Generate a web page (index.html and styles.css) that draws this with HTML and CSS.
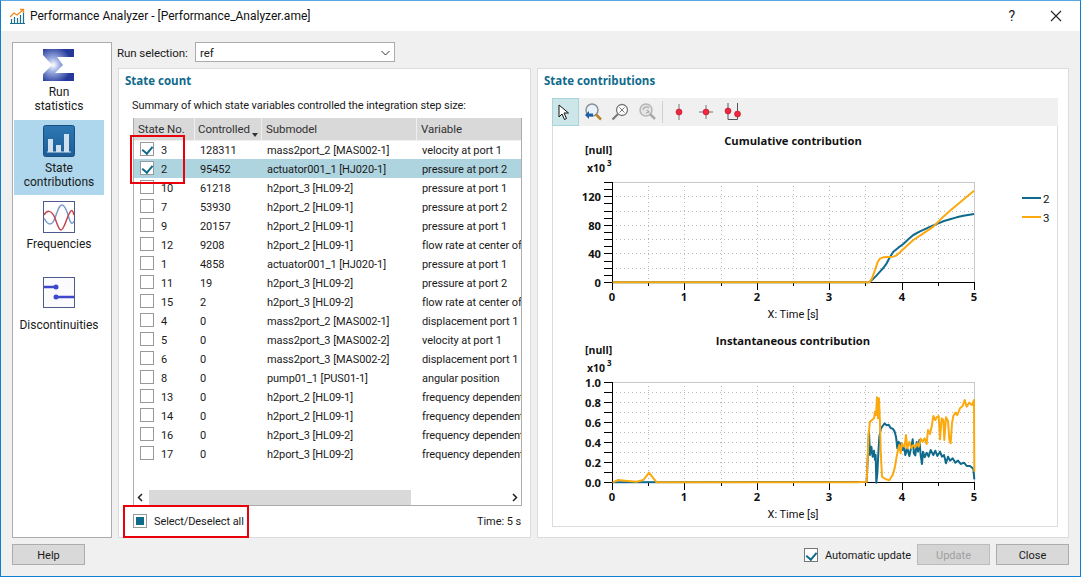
FILE: index.html
```html
<!DOCTYPE html>
<html lang="en">
<head>
<meta charset="utf-8">
<title>Performance Analyzer</title>
<link rel="stylesheet" href="styles.css">
</head>
<body>
<div class="window">
  <header class="titlebar">
    <svg class="app-icon" width="17" height="17" viewBox="0 0 17 17">
      <path d="M1 15.500h15M2.500 15V11M5.500 15V9M8.500 15V10M11.500 15V7M14.500 15V5" fill="none" stroke="#1d6f8f" stroke-width="1.200"/>
      <path d="M1 9l4-4 3 2 6-5M11 1.500h3.500V5" fill="none" stroke="#f08a24" stroke-width="1.300"/>
    </svg>
    <span class="title-text">Performance Analyzer - [Performance_Analyzer.ame]</span>
    <span class="title-help">?</span>
    <svg class="title-close" width="12" height="12" viewBox="0 0 12 12"><path d="M1 1l10 10M11 1L1 11" stroke="#222" stroke-width="1.100" fill="none"/></svg>
  </header>

  <div class="body">
    <div class="workspace">
      <nav class="sidebar">
        <div class="nav-item nav-first">
          <svg width="32" height="33" viewBox="0 0 32 33">
            <defs>
              <radialGradient id="sig" cx="0.33" cy="0.5" r="0.6">
                <stop offset="0" stop-color="#ffffff"/><stop offset="0.35" stop-color="#9fb0e2"/><stop offset="1" stop-color="#24399a"/>
              </radialGradient>
            </defs>
            <path d="M0 0H31V8H14L20 16 12 24H31V32H0V25L9 16 0 6Z" fill="url(#sig)"/>
          </svg>
          <span>Run<br>statistics</span>
        </div>
        <div class="nav-item nav-selected">
          <svg width="33" height="32" viewBox="0 0 33 32">
            <defs><linearGradient id="barbg" x1="0" y1="0" x2="0" y2="1"><stop offset="0" stop-color="#2c78b4"/><stop offset="1" stop-color="#1d5d96"/></linearGradient></defs>
            <rect x="0.500" y="0.500" width="31" height="31" rx="2" fill="url(#barbg)" stroke="#1b4f80"/>
            <path d="M4 27H28" stroke="#cfe2f0" stroke-width="1"/>
            <rect x="5" y="14" width="5" height="13" fill="#cfe0ee"/>
            <rect x="13" y="20" width="5" height="7" fill="#cfe0ee"/>
            <rect x="21" y="9" width="5" height="18" fill="#cfe0ee"/>
          </svg>
          <span>State<br>contributions</span>
        </div>
        <div class="nav-item nav-freq">
          <svg width="33" height="32" viewBox="0 0 33 32">
            <rect x="0.500" y="0.500" width="31" height="31" fill="#fff" stroke="#4d5a8c"/>
            <path d="M1 16C5 24 9 24 12 16S16 3 19 3s5 6 7 13 4 6 5 3" fill="none" stroke="#7b9ccf" stroke-width="1.500" transform="translate(0 1)"/>
            <path d="M1 14C4 9 8 9 11 15s4 14 7 14 5-10 8-16 4-3 5 1" fill="none" stroke="#c4444d" stroke-width="1.500"/>
          </svg>
          <span>Frequencies</span>
        </div>
        <div class="nav-item nav-disc">
          <svg width="33" height="32" viewBox="0 0 33 32">
            <rect x="0.500" y="0.500" width="31" height="30" fill="#fbfbfd" stroke="#4d5a8c"/>
            <path d="M1 10H13M31 20H12" stroke="#3f48cc" stroke-width="2.500"/>
            <circle cx="13" cy="10" r="2.500" fill="#3f48cc"/><circle cx="13" cy="20" r="2.500" fill="#3f48cc"/>
          </svg>
          <span>Discontinuities</span>
        </div>
      </nav>

      <div class="content">
        <div class="run-row">
          <label class="run-label">Run selection:</label>
          <div class="combo"><span>ref</span>
            <svg width="9" height="6" viewBox="0 0 9 6"><path d="M.5 1l4 4 4-4" fill="none" stroke="#333"/></svg>
          </div>
        </div>

        <div class="panels">
          <section class="panel panel-left">
            <h2 class="panel-title">State count</h2>
            <p class="summary">Summary of which state variables controlled the integration step size:</p>
            <div class="table">
              <div class="thead">
                <div class="th">State No.</div>
                <div class="th th-sorted">Controlled<i class="sort"></i></div>
                <div class="th">Submodel</div>
                <div class="th th-last">Variable</div>
              </div>
              <div class="tbody">
                <div class="row"><div class="cell-no"><i class="check checked"></i><span>3</span></div><div>128311</div><div>mass2port_2 [MAS002-1]</div><div>velocity at port 1</div></div>
                <div class="row row-selected"><div class="cell-no"><i class="check checked"></i><span>2</span></div><div>95452</div><div>actuator001_1 [HJ020-1]</div><div>pressure at port 2</div></div>
                <div class="row"><div class="cell-no"><i class="check"></i><span>10</span></div><div>61218</div><div>h2port_3 [HL09-2]</div><div>pressure at port 1</div></div>
                <div class="row"><div class="cell-no"><i class="check"></i><span>7</span></div><div>53930</div><div>h2port_2 [HL09-1]</div><div>pressure at port 2</div></div>
                <div class="row"><div class="cell-no"><i class="check"></i><span>9</span></div><div>20157</div><div>h2port_2 [HL09-1]</div><div>pressure at port 1</div></div>
                <div class="row"><div class="cell-no"><i class="check"></i><span>12</span></div><div>9208</div><div>h2port_2 [HL09-1]</div><div>flow rate at center of pipe</div></div>
                <div class="row"><div class="cell-no"><i class="check"></i><span>1</span></div><div>4858</div><div>actuator001_1 [HJ020-1]</div><div>pressure at port 1</div></div>
                <div class="row"><div class="cell-no"><i class="check"></i><span>11</span></div><div>19</div><div>h2port_3 [HL09-2]</div><div>pressure at port 2</div></div>
                <div class="row"><div class="cell-no"><i class="check"></i><span>15</span></div><div>2</div><div>h2port_3 [HL09-2]</div><div>flow rate at center of pipe</div></div>
                <div class="row"><div class="cell-no"><i class="check"></i><span>4</span></div><div>0</div><div>mass2port_2 [MAS002-1]</div><div>displacement port 1</div></div>
                <div class="row"><div class="cell-no"><i class="check"></i><span>5</span></div><div>0</div><div>mass2port_3 [MAS002-2]</div><div>velocity at port 1</div></div>
                <div class="row"><div class="cell-no"><i class="check"></i><span>6</span></div><div>0</div><div>mass2port_3 [MAS002-2]</div><div>displacement port 1</div></div>
                <div class="row"><div class="cell-no"><i class="check"></i><span>8</span></div><div>0</div><div>pump01_1 [PUS01-1]</div><div>angular position</div></div>
                <div class="row"><div class="cell-no"><i class="check"></i><span>13</span></div><div>0</div><div>h2port_2 [HL09-1]</div><div>frequency dependent friction</div></div>
                <div class="row"><div class="cell-no"><i class="check"></i><span>14</span></div><div>0</div><div>h2port_2 [HL09-1]</div><div>frequency dependent friction</div></div>
                <div class="row"><div class="cell-no"><i class="check"></i><span>16</span></div><div>0</div><div>h2port_3 [HL09-2]</div><div>frequency dependent friction</div></div>
                <div class="row"><div class="cell-no"><i class="check"></i><span>17</span></div><div>0</div><div>h2port_3 [HL09-2]</div><div>frequency dependent friction</div></div>
              </div>
              <div class="hscroll">
                <svg width="6" height="9" viewBox="0 0 6 9"><path d="M5 1L1.500 4.500 5 8" fill="none" stroke="#222" stroke-width="1.500"/></svg>
                <div class="hscroll-track"><div class="hscroll-thumb"></div></div>
                <svg width="6" height="9" viewBox="0 0 6 9"><path d="M1 1l3.500 3.500L1 8" fill="none" stroke="#222" stroke-width="1.500"/></svg>
              </div>
            </div>
            <div class="select-row">
              <i class="check partial"></i>
              <span class="select-label">Select/Deselect all</span>
              <span class="time">Time: 5 s</span>
            </div>
            <div class="redbox redbox-rows"></div>
            <div class="redbox redbox-all"></div>
          </section>

          <div class="splitter"><i></i></div>

          <section class="panel panel-right">
            <h2 class="panel-title">State contributions</h2>
            <div class="toolbar">
              <div class="tool tool-active">
                <svg class="arrow-icon" width="14" height="17" viewBox="0 0 14 17"><path d="M2 1v12l3-3 2.500 5.500 2-1L7 9h4.500z" fill="#fff" stroke="#111"/></svg>
              </div>
              <div class="tool">
                <svg width="18" height="18" viewBox="0 0 18 18"><circle cx="8" cy="7" r="6" fill="#e8f2fa" stroke="#8a8f98" stroke-width="1.500"/><path d="M12 11.500l5 5" stroke="#b5842a" stroke-width="2.500"/><path d="M1 12l4-4v2.500h4v3H5V16z" fill="#1f5fa8"/></svg>
              </div>
              <div class="tool">
                <svg width="18" height="18" viewBox="0 0 18 18"><circle cx="11" cy="7" r="5.500" fill="#fff" stroke="#777" stroke-width="1.300"/><path d="M7 11l-5.500 5.500" stroke="#777" stroke-width="2.200"/><path d="M8.500 4.500l5 5M13.500 4.500l-5 5" stroke="#777"/></svg>
              </div>
              <div class="tool">
                <svg width="18" height="18" viewBox="0 0 18 18"><circle cx="8" cy="7" r="6" fill="#e6e6e6" stroke="#b5b5b5" stroke-width="1.500"/><path d="M12 11l5 5" stroke="#aaa" stroke-width="2.500"/><path d="M5 7a3.500 3.500 0 0 1 6-2M9 7l2 2-3 1" fill="none" stroke="#aaa" stroke-width="1.200"/></svg>
              </div>
              <span class="tool-sep"></span>
              <div class="tool tool-pin">
                <svg width="10" height="18" viewBox="0 0 10 18"><path d="M5 1v16" stroke="#777"/><circle cx="5" cy="9" r="3" fill="#f0263c" stroke="#b3122a" stroke-width=".6"/></svg>
              </div>
              <div class="tool tool-pin">
                <svg width="16" height="18" viewBox="0 0 16 18"><path d="M8 2v14M1 9h14" stroke="#777"/><circle cx="8" cy="9" r="3" fill="#f0263c" stroke="#b3122a" stroke-width=".6"/></svg>
              </div>
              <div class="tool tool-pin">
                <svg width="18" height="18" viewBox="0 0 18 18"><path d="M4 0v16.500H13.500M13.500 0v16.500" fill="none" stroke="#555"/><circle cx="4" cy="8" r="3" fill="#f0263c" stroke="#b3122a" stroke-width=".6"/><circle cx="13.500" cy="11" r="3" fill="#f0263c" stroke="#b3122a" stroke-width=".6"/></svg>
              </div>
            </div>
            <div class="plot-area">
              <svg class="plots" width="504" height="401" viewBox="553 126 504 401">
                <text class="plot-title" x="793" y="145">Cumulative contribution</text>
                <text class="unit" x="585" y="154">[null]</text>
                <text class="unit" x="587" y="172">x10</text>
                <text class="exp" x="607" y="166">3</text>

                <path class="grid" d="M648.500 182V282M684.500 182V282M721.500 182V282M757.500 182V282M793.500 182V282M829.500 182V282M865.500 182V282M902.500 182V282M938.500 182V282M612 196.500H975M612 211.500H975M612 225.500H975M612 239.500H975M612 253.500H975M612 268.500H975"/>
                <path class="frame" d="M612 182.500H974.500V282"/>
                <path class="axis" d="M612.500 182V282.500H975M604 182.500H612M604 189.500H612M604 196.500H612M604 203.500H612M604 211.500H612M604 218.500H612M604 225.500H612M604 232.500H612M604 239.500H612M604 246.500H612M604 253.500H612M604 261.500H612M604 268.500H612M604 275.500H612M604 282.500H612M612.500 282V290M648.500 282V286M684.500 282V290M721.500 282V286M757.500 282V290M793.500 282V286M829.500 282V290M865.500 282V286M902.500 282V290M938.500 282V286M974.500 282V290"/>
                <text class="ytick" x="601" y="201">120</text>
                <text class="ytick" x="601" y="230">80</text>
                <text class="ytick" x="601" y="258">40</text>
                <text class="ytick" x="601" y="287">0</text>
                <text class="xtick" x="612" y="301">0</text>
                <text class="xtick" x="684" y="301">1</text>
                <text class="xtick" x="757" y="301">2</text>
                <text class="xtick" x="829" y="301">3</text>
                <text class="xtick" x="902" y="301">4</text>
                <text class="xtick" x="974" y="301">5</text>
                <text class="xlabel" x="793" y="318">X: Time [s]</text>
                <g transform="translate(550 170) scale(.33333)">
                  <polyline class="line line-blue" points="188,337 958,337 968,328 980,316 990,305 1000,294 1010,280 1020,261 1030,245 1045,233 1060,222 1075,208 1090,195 1110,184 1130,175 1148,167 1165,160 1182,153 1200,148 1220,142 1240,137 1272,132"/>
                  <polyline class="line line-orange" points="188,337 958,337 966,325 975,300 983,276 990,266 1000,262 1015,261 1030,260 1040,256 1050,247 1070,228 1090,210 1120,190 1150,170 1175,145 1200,122 1235,93 1272,62"/>
                </g>
                <path class="legend-blue" d="M1022 198H1041"/>
                <path class="legend-orange" d="M1022 217H1041"/>
                <text class="legend" x="1043" y="203">2</text>
                <text class="legend" x="1043" y="222">3</text>

                <text class="plot-title" x="793" y="345">Instantaneous contribution</text>
                <text class="unit" x="585" y="354">[null]</text>
                <text class="unit" x="587" y="372">x10</text>
                <text class="exp" x="607" y="366">3</text>

                <path class="grid" d="M648.500 382V482M684.500 382V482M721.500 382V482M757.500 382V482M793.500 382V482M829.500 382V482M865.500 382V482M902.500 382V482M938.500 382V482M612 392.500H975M612 402.500H975M612 412.500H975M612 422.500H975M612 432.500H975M612 442.500H975M612 452.500H975M612 462.500H975M612 472.500H975"/>
                <path class="frame" d="M612 382.500H974.500V482"/>
                <path class="axis" d="M612.500 382V482.500H975M604 382.500H612M604 392.500H612M604 402.500H612M604 412.500H612M604 422.500H612M604 432.500H612M604 442.500H612M604 452.500H612M604 462.500H612M604 472.500H612M604 482.500H612M612.500 482V490M648.500 482V486M684.500 482V490M721.500 482V486M757.500 482V490M793.500 482V486M829.500 482V490M865.500 482V486M902.500 482V490M938.500 482V486M974.500 482V490"/>
                <text class="ytick" x="601" y="387">1.0</text>
                <text class="ytick" x="601" y="407">0.8</text>
                <text class="ytick" x="601" y="427">0.6</text>
                <text class="ytick" x="601" y="447">0.4</text>
                <text class="ytick" x="601" y="467">0.2</text>
                <text class="ytick" x="601" y="487">0.0</text>
                <text class="xtick" x="612" y="501">0</text>
                <text class="xtick" x="684" y="501">1</text>
                <text class="xtick" x="757" y="501">2</text>
                <text class="xtick" x="829" y="501">3</text>
                <text class="xtick" x="902" y="501">4</text>
                <text class="xtick" x="974" y="501">5</text>
                <text class="xlabel" x="793" y="518">X: Time [s]</text>
                <g transform="translate(550 340) scale(.33333)">
                  <polyline class="line line-blue" points="188,427 950,425 957,275 960,345 964,320 968,350 972,332 975,360 977,345 979,428 982,400 985,340 988,290 993,265 998,258 1004,250 1010,256 1016,254 1022,264 1028,266 1034,275 1038,290 1042,325 1046,305 1050,320 1054,310 1058,330 1062,318 1066,345 1072,325 1078,348 1084,320 1088,298 1092,340 1096,346 1100,306 1104,335 1108,300 1112,345 1116,372 1119,335 1124,352 1130,338 1136,350 1142,330 1150,345 1156,332 1162,348 1170,335 1176,350 1182,345 1188,370 1194,350 1200,362 1208,355 1216,368 1224,362 1232,372 1242,368 1250,378 1260,378 1270,386 1273,418"/>
                  <polyline class="line line-orange" points="188,427 205,420 225,422 260,425 280,420 297,398 320,427 920,427 950,425 956,280 960,245 966,240 972,235 975,215 978,225 981,172 984,235 987,175 990,250 992,330 996,410 1003,415 1010,418 1018,421 1028,405 1034,385 1040,350 1044,330 1048,315 1052,340 1056,310 1060,318 1064,320 1068,285 1072,325 1078,305 1084,325 1090,315 1096,322 1102,310 1106,320 1112,296 1118,305 1124,295 1130,312 1134,270 1140,282 1146,255 1150,228 1156,240 1160,232 1166,228 1170,298 1175,235 1180,240 1183,300 1188,232 1194,242 1198,300 1202,310 1206,250 1210,228 1216,218 1222,225 1230,205 1238,198 1244,180 1250,200 1258,188 1266,195 1272,180 1273,395"/>
                </g>
              </svg>
            </div>
          </section>
        </div>
      </div>
    </div>

    <footer class="footer">
      <button class="btn">Help</button>
      <div class="footer-right">
        <i class="check checked check-dark"></i>
        <span class="auto-label">Automatic update</span>
        <button class="btn btn-disabled">Update</button>
        <button class="btn">Close</button>
      </div>
    </footer>
  </div>
</div>
</body>
</html>
```
FILE: styles.css
```css
* { box-sizing: border-box; }
html, body { margin: 0; padding: 0; }
body { width: 1081px; height: 577px; overflow: hidden; font-family: Roboto, "Open Sans", sans-serif; font-size: 11px; letter-spacing: -0.08px; color: #1a1a1a; }

.window { width: 1081px; height: 577px; display: flex; flex-direction: column; border: 1px solid #0f7fd6; border-top-color: #5aa7e3; background: #f0f0f0; }

.titlebar { height: 30px; flex: none; background: #fff; display: flex; align-items: center; padding-left: 8px; letter-spacing: 0; }
.app-icon { flex: none; }
.title-text { margin-left: 4px; font-size: 12px; color: #111; }
.title-help { margin-left: auto; font-size: 14px; }
.title-close { margin-left: 35px; margin-right: 18px; }

.body { flex: 1; display: flex; flex-direction: column; padding: 11px; min-height: 0; }
.workspace { display: flex; gap: 6px; height: 496px; }

.sidebar { width: 100px; flex: none; background: #fff; border: 1px solid #acacac; padding: 0 1px; display: flex; flex-direction: column; font-size: 12px; letter-spacing: 0; }
.nav-item { display: flex; flex-direction: column; align-items: center; text-align: center; line-height: 14px; width: 90px; }
.nav-first { padding-top: 6px; height: 77px; gap: 3px; }
.nav-selected { background: #aed6ec; height: 75px; padding-top: 5px; gap: 4px; }
.nav-freq { height: 76px; padding-top: 6px; gap: 4px; }
.nav-disc { height: 80px; gap: 9px; padding-top: 6px; }
.nav-item svg { display: block; }

.content { flex: 1; min-width: 0; display: flex; flex-direction: column; }
.run-row { height: 26px; flex: none; display: flex; align-items: flex-start; margin-left: -1px; font-size: 11.5px; }
.run-label { width: 78px; line-height: 22px; }
.combo { width: 200px; height: 20px; background: #fff; border: 1px solid #acacac; display: flex; align-items: center; justify-content: space-between; padding: 1px 4px 0; }

.panels { flex: 1; display: flex; min-height: 0; }
.panel { background: #fff; border: 1px solid #dcdcdc; position: relative; display: flex; flex-direction: column; }
.panel-left { width: 413px; flex: none; padding: 0 8px 0 14px; }
.panel-right { width: 532px; flex: none; padding: 0 10px 10px 14px; }
.panel-title { margin: 0; font-family: "Open Sans", sans-serif; font-size: 11.5px; letter-spacing: 0; line-height: 16px; padding-top: 4px; height: 20px; font-weight: 700; color: #0f6a8c; }
.panel-left .panel-title { margin-left: -8px; }
.panel-right .panel-title { margin-left: -8px; }
.summary { margin: 9px 0 0 -1px; line-height: 15px; height: 20px; white-space: nowrap; }

.table { width: 389px; height: 388px; border: 1px solid #acacac; border-top: 0; display: flex; flex-direction: column; overflow: hidden; }
.thead { display: grid; grid-template-columns: 61px 67px 155px 1fr; height: 22px; flex: none; background: #d9d9d9; }
.th { border-right: 1px solid #efefef; padding-left: 4px; line-height: 22px; color: #333; position: relative; border-bottom: 1px solid #efefef; font-size: 11.5px; }
.th-sorted { padding-left: 3px; }
.th-last { border-right: 0; padding-left: 4px; }
.sort { position: absolute; right: 3px; bottom: 3px; border: 3px solid transparent; border-top: 4px solid #333; border-bottom: 0; }
.tbody { flex: 1; min-height: 0; overflow: hidden; }
.row { display: grid; grid-template-columns: 61px 67px 155px 105px; height: 19px; line-height: 19px; white-space: nowrap; }
.row > div { overflow: hidden; padding: 1px 0 0 5px; }
.row > .cell-no { display: flex; align-items: flex-start; padding: 2px 0 0 6px; gap: 7px; }
.cell-no span { margin-top: -1px; }
.row-selected { background: #aed4df; }

.check { display: block; flex: none; width: 14px; height: 14px; border: 1px solid #999; background: #fff; position: relative; }
.check.checked::after { content: ""; position: absolute; left: 3px; top: 1px; width: 5px; height: 8px; border: solid #0f6a8c; border-width: 0 2px 2px 0; transform: rotate(40deg); }
.check.partial::after { content: ""; position: absolute; left: 2px; top: 2px; width: 8px; height: 8px; background: #0f6a8c; }
.check-dark { border-color: #777; }

.hscroll { height: 15px; flex: none; display: flex; align-items: center; padding: 0 3px; background: #fff; }
.hscroll-track { flex: 1; height: 15px; padding: 0 101px 0 6px; }
.hscroll-thumb { height: 100%; background: #d9d9d9; }

.select-row { flex: 1; display: flex; align-items: center; padding-bottom: 2px; }
.select-label { margin: 2px 0 0 7px; }
.time { margin: 2px 1px 0 auto; }

.redbox { position: absolute; border: 2px solid #e8000b; pointer-events: none; }
.redbox-rows { left: 11px; top: 66px; width: 55px; height: 49px; }
.redbox-all { left: 4px; top: 436px; width: 126px; height: 33px; }

.splitter { width: 6px; flex: none; display: flex; align-items: center; justify-content: center; }
.splitter i { display: block; width: 3px; height: 32px; background-image: radial-gradient(#bbb 40%, transparent 45%); background-size: 2px 2px; }

.toolbar { height: 28px; flex: none; margin-top: 9px; background: #f0f0f0; display: flex; align-items: center; }
.tool { width: 27px; height: 28px; display: flex; align-items: center; justify-content: center; }
.tool-active { background: #cce6ea; border: 1px solid #a8d4dc; }
.arrow-icon { margin-right: 3px; }
.tool-sep { width: 1px; height: 22px; background: #d0d0d0; margin: 0 2px; }
.tool-pin { width: 27px; }
.plot-area { flex: 1; min-height: 0; border: 1px solid #dcdcdc; border-top: 0; background: #fff; }
.plots { display: block; }

.plots text { font-family: "Open Sans", sans-serif; font-size: 11.2px; letter-spacing: 0; fill: #111; }
.plots .plot-title { font-weight: 700; text-anchor: middle; }
.plots .unit { font-weight: 700; font-size: 10.5px; }
.plots .exp { font-weight: 700; font-size: 8px; }
.plots .ytick { font-weight: 700; text-anchor: end; }
.plots .xtick { font-weight: 700; text-anchor: middle; }
.plots .xlabel { font-family: Roboto, sans-serif; font-size: 11px; text-anchor: middle; }
.plots .legend { font-family: Roboto, sans-serif; font-size: 11.5px; }
.grid { fill: none; stroke: #b8b8b8; stroke-width: 1; stroke-dasharray: 1 3; shape-rendering: crispEdges; }
.frame { fill: none; stroke: #c8c8c8; shape-rendering: crispEdges; }
.axis { fill: none; stroke: #000; shape-rendering: crispEdges; }
.line { fill: none; stroke-linejoin: round; }
.line-blue { stroke: #0f6a8c; stroke-width: 6; }
.line-orange { stroke: #fba90f; stroke-width: 6; }
.legend-blue { stroke: #0f6a8c; stroke-width: 2; }
.legend-orange { stroke: #fba90f; stroke-width: 2; }

.footer { flex: 1; display: flex; align-items: flex-start; justify-content: space-between; padding-top: 6px; }
.footer-right { display: flex; align-items: center; }
.btn { width: 73px; height: 21px; padding: 2px 0 0; background: #d9d9d9; border: 1px solid #acacac; font: inherit; color: #1a1a1a; }
.btn-disabled { color: #a0a0a0; margin-right: 6px; background: #d4d4d4; border-color: #bcbcbc; }
.auto-label { margin: 1px 6px 0 7px; }
```
